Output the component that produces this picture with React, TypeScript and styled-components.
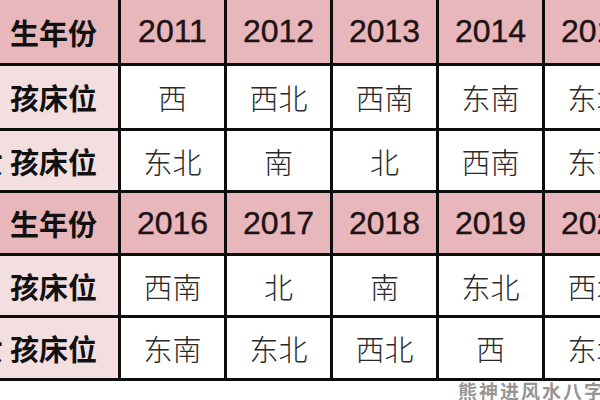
import React from 'react';
import styled, { createGlobalStyle } from 'styled-components';

const GlobalStyle = createGlobalStyle`
  html, body {
    margin: 0;
    padding: 0;
    background: #fff;
  }
`;

type Row =
  | { kind: 'head'; label: string; cells: string[] }
  | { kind: 'data'; label: string; cells: string[] };

const rows: Row[] = [
  { kind: 'head', label: '出生年份', cells: ['2011', '2012', '2013', '2014', '2015'] },
  { kind: 'data', label: '男孩床位', cells: ['西', '西北', '西南', '东南', '东北'] },
  { kind: 'data', label: '女孩床位', cells: ['东北', '南', '北', '西南', '东南'] },
  { kind: 'head', label: '出生年份', cells: ['2016', '2017', '2018', '2019', '2020'] },
  { kind: 'data', label: '男孩床位', cells: ['西南', '北', '南', '东北', '西北'] },
  { kind: 'data', label: '女孩床位', cells: ['东南', '东北', '西北', '西', '东北'] },
];

const App: React.FC = () => (
  <Page>
    <GlobalStyle />
    <Table>
      {rows.map((row, r) => (
        <React.Fragment key={r}>
          <LabelCell $head={row.kind === 'head'}>
            <Lead $tight={row.label.startsWith('女')}>{row.label.slice(0, 1)}</Lead>
            {row.label.slice(1)}
          </LabelCell>
          {row.cells.map((c, i) =>
            row.kind === 'head' ? (
              <YearCell key={i}>{c}</YearCell>
            ) : (
              <ValueCell key={i}>{c}</ValueCell>
            )
          )}
        </React.Fragment>
      ))}
    </Table>
    <Footer>
      <Watermark>熊神进风水八字</Watermark>
    </Footer>
  </Page>
);

export default App;

const Page = styled.div`
  width: 600px;
  height: 400px;
  overflow: hidden;
  background: #fff;
  display: flex;
  flex-direction: column;
`;

const Table = styled.div`
  display: grid;
  grid-template-columns: 156px repeat(5, 103px);
  grid-template-rows: 63px 62px 59px 60px 59px 60px;
  gap: 3px;
  padding-bottom: 3px;
  margin-left: -38px;
  width: max-content;
  background: #0d0d0d;
`;

const Cell = styled.div`
  display: flex;
  align-items: center;
  justify-content: center;
  white-space: nowrap;
  overflow: hidden;
`;

const LabelCell = styled(Cell)<{ $head: boolean }>`
  justify-content: flex-end;
  padding-right: 21px;
  background: ${p => (p.$head ? '#e8b7bb' : '#f3dfe0')};
  font-family: 'Noto Sans CJK SC', sans-serif;
  font-weight: 700;
  font-size: 29px;
  color: #111;
`;

const Lead = styled.span<{ $tight: boolean }>`
  margin-right: ${p => (p.$tight ? '7px' : '12px')};
`;

const YearCell = styled(Cell)`
  background: #e8b7bb;
  font-family: 'Liberation Sans', Arial, sans-serif;
  font-size: 32px;
  color: #1e1216;
  -webkit-text-stroke: 0.4px #1e1216;
`;

const ValueCell = styled(Cell)`
  background: #fff;
  font-family: 'Noto Sans CJK SC', sans-serif;
  font-weight: 300;
  font-size: 29px;
  color: #2a2a2a;
`;

const Footer = styled.div`
  display: flex;
  justify-content: flex-end;
  margin-right: -5px;
  padding-top: 1px;
`;

const Watermark = styled.span`
  font-family: 'Noto Sans CJK SC', sans-serif;
  font-weight: 700;
  font-size: 19px;
  letter-spacing: 2px;
  line-height: 18px;
  color: #969696;
`;
